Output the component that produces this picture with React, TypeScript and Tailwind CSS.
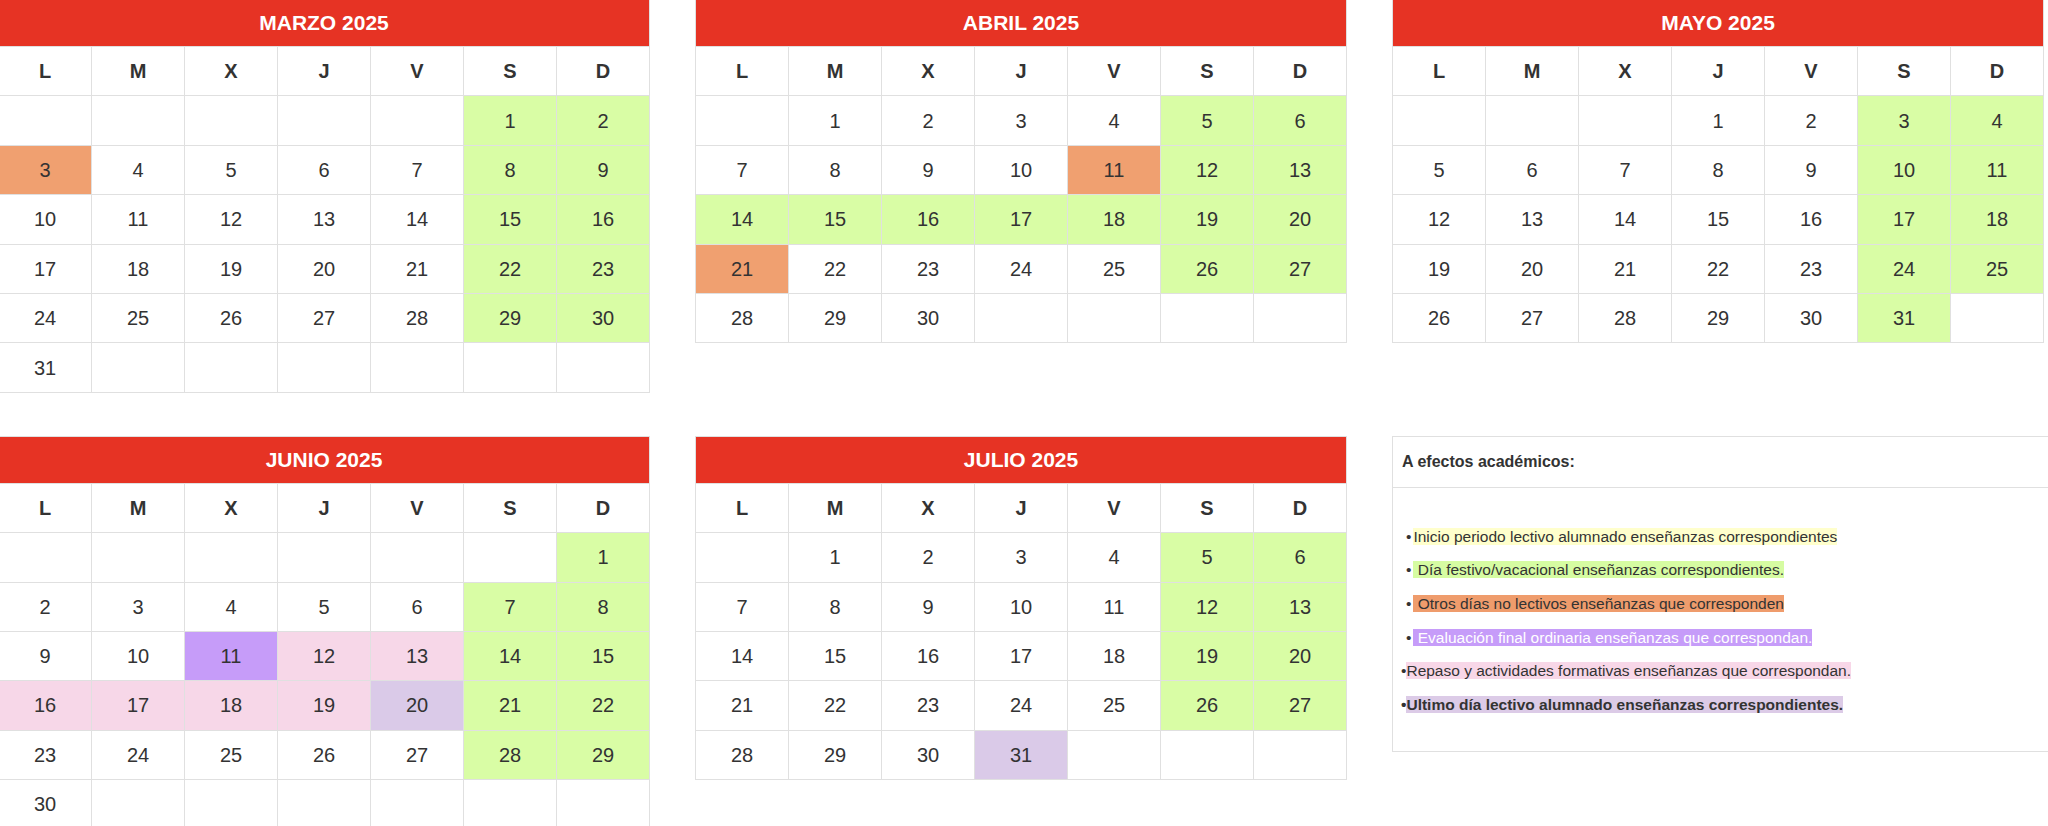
import React from 'react'

type Tone = 'green' | 'orange' | 'purple' | 'pink' | 'lilac'

type Month = {
  title: string
  offset: number
  days: number
  rows: number
  marks: Record<number, Tone>
}

const toneBg: Record<Tone, string> = {
  green: 'bg-[#d9fda5]',
  orange: 'bg-[#f0a070]',
  purple: 'bg-[#c69cf9]',
  pink: 'bg-[#f7d7e8]',
  lilac: 'bg-[#dacae8]',
}

const weekdays = ['L', 'M', 'X', 'J', 'V', 'S', 'D']

const months: Month[] = [
  { title: 'MARZO 2025', offset: 5, days: 31, rows: 6, marks: { 3: 'orange' } },
  {
    title: 'ABRIL 2025',
    offset: 1,
    days: 30,
    rows: 5,
    marks: { 11: 'orange', 21: 'orange', 14: 'green', 15: 'green', 16: 'green', 17: 'green', 18: 'green' },
  },
  { title: 'MAYO 2025', offset: 3, days: 31, rows: 5, marks: {} },
  {
    title: 'JUNIO 2025',
    offset: 6,
    days: 30,
    rows: 6,
    marks: { 11: 'purple', 12: 'pink', 13: 'pink', 16: 'pink', 17: 'pink', 18: 'pink', 19: 'pink', 20: 'lilac' },
  },
  { title: 'JULIO 2025', offset: 1, days: 31, rows: 5, marks: { 31: 'lilac' } },
]

function MonthTable({ month }: { month: Month }) {
  const cells: (number | null)[] = []
  for (let i = 0; i < month.rows * 7; i++) {
    const d = i - month.offset + 1
    cells.push(d >= 1 && d <= month.days ? d : null)
  }

  return (
    <div className="w-[652px] shrink-0 border-l border-t border-[#e0e0e0]">
      <div className="flex h-[47px] items-center justify-center border-r border-b border-[#e0e0e0] bg-[#e63324] text-[21px] font-bold text-white">
        {month.title}
      </div>
      <div className="grid grid-cols-7">
        {weekdays.map((w) => (
          <div
            key={w}
            className="flex h-[49.4px] items-center justify-center border-r border-b border-[#e0e0e0] text-[20px] font-bold text-[#333]"
          >
            {w}
          </div>
        ))}
        {cells.map((d, i) => {
          const col = i % 7
          let bg = 'bg-white'
          if (d !== null) {
            const tone = month.marks[d] ?? (col >= 5 ? 'green' : null)
            if (tone) bg = toneBg[tone]
          }
          return (
            <div
              key={i}
              className={`flex h-[49.4px] items-center justify-center border-r border-b border-[#e0e0e0] text-[20px] text-[#333] ${bg}`}
            >
              {d ?? ''}
            </div>
          )
        })}
      </div>
    </div>
  )
}

function Legend() {
  return (
    <div className="w-[700px] shrink-0 self-start border-l border-t border-b border-[#e0e0e0]">
      <div className="flex h-[51px] items-center border-b border-[#e0e0e0] pl-[9px] text-[16px] font-bold text-[#333]">
        A efectos académicos:
      </div>
      <div className="flex flex-col gap-[16.6px] pt-[40px] pb-[38px] text-[15.5px] leading-[17px] text-[#333]">
        <div className="pl-[13px]">
          <span className="mr-[2px]">•</span>
          <span className="bg-[#ffffcc]">Inicio periodo lectivo alumnado enseñanzas correspondientes</span>
        </div>
        <div className="pl-[13px]">
          <span className="mr-[2px]">•</span>
          <span className="bg-[#d6fca2]">{'\u00a0'}Día festivo/vacacional enseñanzas correspondientes.</span>
        </div>
        <div className="pl-[13px]">
          <span className="mr-[2px]">•</span>
          <span className="bg-[#ef9c6c]">{'\u00a0'}Otros días no lectivos enseñanzas que corresponden</span>
        </div>
        <div className="pl-[13px]">
          <span className="mr-[2px]">•</span>
          <span className="bg-[#c69cf9] text-white">{'\u00a0'}Evaluación final ordinaria enseñanzas que correspondan.</span>
        </div>
        <div className="pl-[8px]">
          <span>•</span>
          <span className="bg-[#f8d7e8]">Repaso y actividades formativas enseñanzas que correspondan.</span>
        </div>
        <div className="pl-[8px] font-bold">
          <span>•</span>
          <span className="bg-[#dccbe7]">Ultimo día lectivo alumnado enseñanzas correspondientes.</span>
        </div>
      </div>
    </div>
  )
}

export default function App() {
  return (
    <div
      className="h-[826px] w-[2048px] overflow-hidden bg-white"
      style={{ fontFamily: '"Liberation Sans", Arial, sans-serif' }}
    >
      <div className="-mt-px -ml-[2px] flex flex-col gap-[43px]">
        <div className="flex items-start gap-[45px]">
          {months.slice(0, 3).map((m) => (
            <MonthTable key={m.title} month={m} />
          ))}
        </div>
        <div className="flex items-start gap-[45px]">
          {months.slice(3).map((m) => (
            <MonthTable key={m.title} month={m} />
          ))}
          <Legend />
        </div>
      </div>
    </div>
  )
}
